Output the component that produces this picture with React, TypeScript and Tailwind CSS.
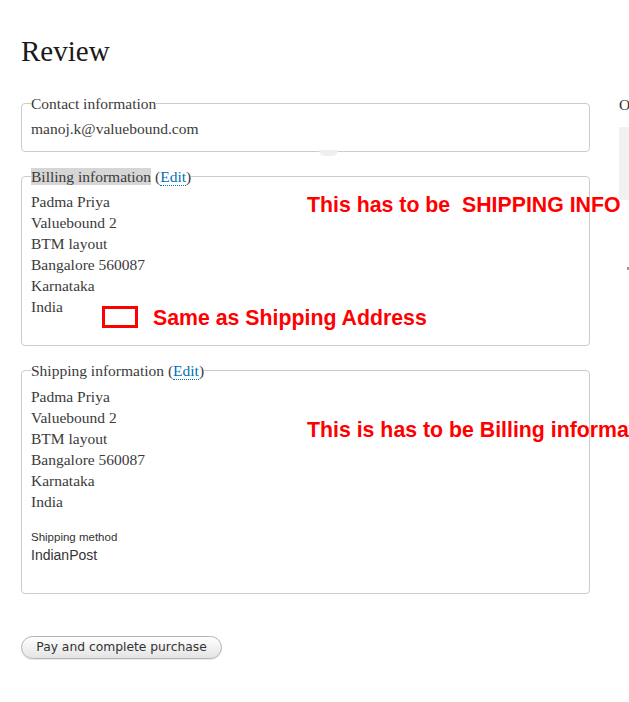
const serif = "font-['Liberation_Serif','Times_New_Roman',serif]";
const arial = "font-['Liberation_Sans',Arial,sans-serif]";

const address = ["Padma Priya", "Valuebound 2", "BTM layout", "Bangalore 560087", "Karnataka", "India"];

function EditLink() {
  return (
    <>
      {" ("}
      <a href="#" className="text-[#0071b3] border-b border-dotted border-[#0071b3]">
        Edit
      </a>
      {")"}
    </>
  );
}

export default function App() {
  return (
    <div className={`w-[629px] h-[702px] overflow-hidden bg-white text-[#3b3b3b] ${serif}`}>
      <div className="flex gap-[29px] pl-[21px]">
        <main className="w-[569px] shrink-0">
          <h1 className="mt-[34px] text-[29px] leading-[35px] text-[#1a1a1a]">Review</h1>

          <div className="relative mt-[24px]">
            <fieldset className="border border-[#cccccc] rounded-[4px] px-[9px] pb-[12px]">
              <legend className="text-[15.5px] leading-[21px]">Contact information</legend>
              <div className="pt-[4px] text-[15.5px] leading-[21px]">manoj.k@valuebound.com</div>
            </fieldset>
            <div className="absolute left-[298px] top-[57px] w-[19px] h-[6px] rounded-b-full bg-[#efefef]" />
          </div>

          <fieldset className="mt-[14px] border border-[#cccccc] rounded-[4px] px-[9px] pb-[28px]">
            <legend className="text-[15.5px] leading-[21px]">
              <span className="bg-[#d6d6d6]">Billing information</span>
              <EditLink />
            </legend>
            <div className="relative pt-[4px] text-[15.5px] leading-[21px]">
              {address.map((line) => (
                <div key={line}>{line}</div>
              ))}
              <div className={`absolute left-[276px] top-[6px] whitespace-pre text-[21.3px] leading-[25px] font-bold text-[#ff0000] ${arial}`}>
                This has to be  SHIPPING INFO
              </div>
              <div className="absolute left-[71px] top-[119px] w-[36px] h-[22px] border-[3px] border-[#ff0000]" />
              <div className={`absolute left-[122px] top-[119px] whitespace-nowrap text-[21.3px] leading-[25px] font-bold text-[#ff0000] ${arial}`}>
                Same as Shipping Address
              </div>
            </div>
          </fieldset>

          <fieldset className="mt-[14px] border border-[#cccccc] rounded-[4px] px-[9px] pb-[28px]">
            <legend className="text-[15.5px] leading-[21px]">
              Shipping information
              <EditLink />
            </legend>
            <div className="relative pt-[5px] text-[15.5px] leading-[21px]">
              {address.map((line) => (
                <div key={line}>{line}</div>
              ))}
              <div className={`absolute left-[276px] top-[37px] whitespace-nowrap text-[21.3px] leading-[25px] font-bold text-[#ff0000] ${arial}`}>
                This is has to be Billing information
              </div>
            </div>
            <div className={`mt-[17px] text-[11.5px] leading-[16px] text-[#333] ${arial}`}>Shipping method</div>
            <div className={`text-[14px] leading-[20px] text-[#333] ${arial}`}>IndianPost</div>
          </fieldset>

          <button
            className="mt-[42px] h-[23px] w-[201px] rounded-full border border-[#b4b4b4] bg-gradient-to-b from-white to-[#e4e4e4] text-[12.3px] text-[#333] font-['DejaVu_Sans',Verdana,sans-serif] shadow-[0_1px_0_#e8e8e8]"
          >
            Pay and complete purchase
          </button>
        </main>

        <aside className="w-[250px] shrink-0">
          <div className="mt-[94px] text-[15.5px] leading-[21px] text-[#333] whitespace-nowrap">Order total</div>
          <div className="mt-[12px] h-[73px] bg-[#f1f1f1]" />
          <div className="mt-[67px] ml-[8px] w-[2px] h-[3px] bg-[#999]" />
        </aside>
      </div>
    </div>
  );
}
